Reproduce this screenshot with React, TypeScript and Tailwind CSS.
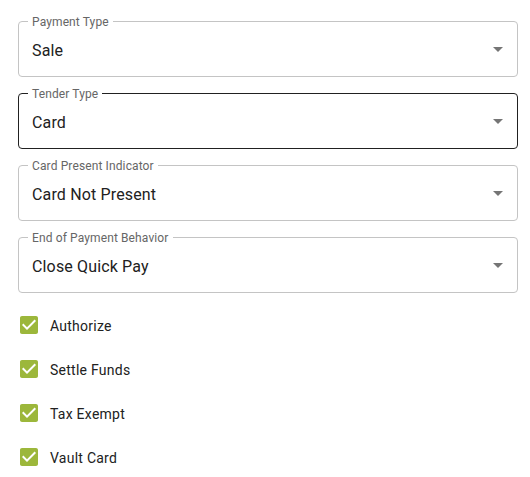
import React from "react";

function Field({ label, value, active }: { label: string; value: string; active?: boolean }) {
  return (
    <div
      className={
        "relative h-[56px] rounded-[4px] border flex items-center pl-[13px] pt-[3px] " +
        (active ? "border-[#212121]" : "border-[#c4c4c4]")
      }
    >
      <span className="absolute left-[9px] top-[-8px] px-[4px] bg-white text-[12px] leading-[16px] tracking-[0.12px] text-[#666666]">
        {label}
      </span>
      <span className="text-[16px] leading-[23px] tracking-[0.15px] text-[#212121]">{value}</span>
      <svg
        className="absolute right-[7px] top-1/2 -translate-y-1/2"
        width="24"
        height="24"
        viewBox="0 0 24 24"
      >
        <path d="M7 10l5 5 5-5z" fill="rgba(0,0,0,0.54)" />
      </svg>
    </div>
  );
}

function Check({ label }: { label: string }) {
  return (
    <div className="flex items-center h-[44px]">
      <svg width="24" height="24" viewBox="0 0 24 24" className="ml-[-1px] mr-[9px] -translate-y-[1px]">
        <path
          d="M19 3H5c-1.11 0-2 .9-2 2v14c0 1.1.89 2 2 2h14c1.11 0 2-.9 2-2V5c0-1.1-.89-2-2-2zm-9 14l-5-5 1.41-1.41L10 14.17l7.59-7.59L19 8l-9 9z"
          fill="#9cb73b"
        />
      </svg>
      <span className="text-[14px] tracking-[0.25px] text-[#212121]">{label}</span>
    </div>
  );
}

export default function App() {
  return (
    <div
      className="w-[530px] h-[477px] bg-white pt-[21px] px-[18px]"
      style={{ fontFamily: "Roboto, 'Liberation Sans', sans-serif" }}
    >
      <div className="w-[500px] flex flex-col gap-[16px]">
        <Field label="Payment Type" value="Sale" />
        <Field label="Tender Type" value="Card" active />
        <Field label="Card Present Indicator" value="Card Not Present" />
        <Field label="End of Payment Behavior" value="Close Quick Pay" />
      </div>
      <div className="mt-[11px] flex flex-col">
        <Check label="Authorize" />
        <Check label="Settle Funds" />
        <Check label="Tax Exempt" />
        <Check label="Vault Card" />
      </div>
    </div>
  );
}
